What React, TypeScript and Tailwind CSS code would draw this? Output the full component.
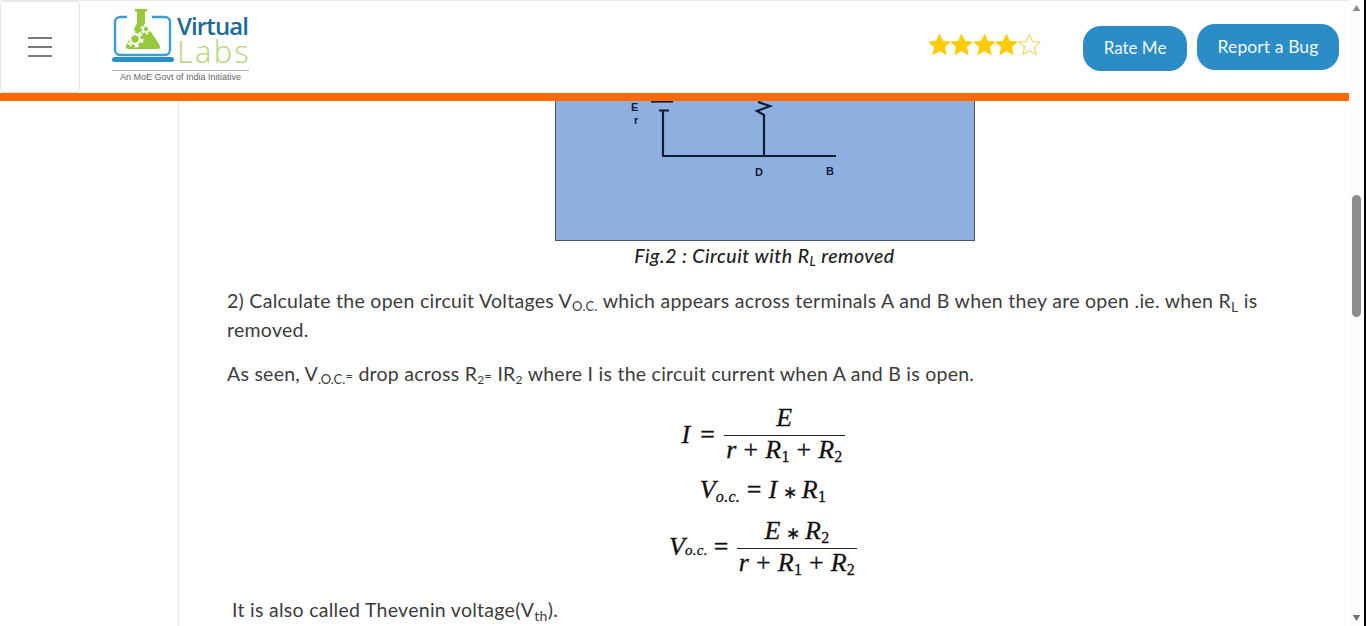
import React from 'react';

const Star = ({ filled }: { filled: boolean }) => (
  <svg viewBox="0 0 24 24" className="h-[23px] w-[23px] -mr-[0.5px]">
    <path
      d="M12 1.5l3.2 7.2 7.8.8-5.9 5.2 1.8 7.7L12 18.4l-6.9 4 1.8-7.7L1 9.5l7.8-.8z"
      fill={filled ? '#ffcc00' : '#ffffff'}
      stroke={filled ? '#ffcc00' : '#f5d76a'}
      strokeWidth={filled ? 1 : 1.2}
      strokeLinejoin="round"
    />
  </svg>
);

const Gear = ({ cx, cy, r, w }: { cx: number; cy: number; r: number; w: number }) => (
  <g fill="none" stroke="#ffffff">
    <circle cx={cx} cy={cy} r={r * 0.6} strokeWidth={w} />
    <circle cx={cx} cy={cy} r={r * 0.92} strokeWidth={w * 1.1} strokeDasharray={`${r * 0.5} ${r * 0.46}`} />
  </g>
);

const Logo = () => (
  <div className="flex w-[137px] flex-col">
    <div className="flex h-[55px] items-start">
      <svg viewBox="0 0 62 55" className="h-[55px] w-[62px] shrink-0">
        <path d="M15 9 H8 a5 5 0 0 0 -5 5 V42 a5 5 0 0 0 5 5 H53 a5 5 0 0 0 5 -5 V14 a5 5 0 0 0 -5 -5 H40" fill="none" stroke="#3a9fd0" strokeWidth="2.4" />
        <path d="M2.5 49 H59.5 a2.5 2.5 0 0 1 0 5 H2.5 a2.5 2.5 0 0 1 0 -5 Z" fill="#2a8fc9" />
        <path d="M23 1 H35 V3.5 H33 V15 L47 36 Q50 41 45 41 H18 Q11 41 15 36 L25 15 V3.5 H23 Z" fill="#97c93d" />
        <Gear cx={23} cy={31} r={8} w={2.2} />
        <Gear cx={34} cy={21} r={5} w={1.6} />
      </svg>
      <div className="ml-[3px] flex flex-col pt-[4px] font-['Open_Sans',sans-serif]">
        <span className="text-[24px] leading-[27px] font-semibold tracking-[-0.9px] text-[#1c6a9c]">Virtual</span>
        <span className="-mt-[1px] text-[31px] leading-[26px] font-light tracking-[2.2px] text-[#b3d67c]">Labs</span>
      </div>
    </div>
    <div className="mt-[7px] border-t border-[#b5b5b5] pt-[1px] text-center font-['Liberation_Sans',sans-serif] text-[9px] leading-[11px] text-[#666]">
      An MoE Govt of India Initiative
    </div>
  </div>
);

const Header = () => (
  <header className="shrink-0">
    <div className="flex h-[93px] items-center border-t border-[#e8e8e8] bg-white">
      <button className="flex h-[92px] w-[80px] shrink-0 items-center justify-center rounded-[4px] border border-[#e6e6e6]">
        <span className="flex w-[24px] flex-col gap-[7px]">
          <span className="h-[2px] bg-[#7b7b7b]" />
          <span className="h-[2px] bg-[#7b7b7b]" />
          <span className="h-[2px] bg-[#7b7b7b]" />
        </span>
      </button>
      <div className="mt-[7px] ml-[32px] self-start">
        <Logo />
      </div>
      <div className="ml-auto flex items-center">
        <div className="mr-[43px] mb-[5px] flex">
          <Star filled />
          <Star filled />
          <Star filled />
          <Star filled />
          <Star filled={false} />
        </div>
        <button className="mt-[2px] h-[45px] w-[104px] rounded-[18px] bg-[#2b8cc8] text-[17px] text-[#f2f8fc]">Rate Me</button>
        <button className="mx-[10px] h-[46px] w-[142px] rounded-[18px] bg-[#2b8cc8] text-[17.5px] tracking-[0.1px] text-[#f2f8fc]">Report a Bug</button>
      </div>
    </div>
    <div className="h-[8px] bg-[#ff6a00]" />
  </header>
);

const Figure = () => (
  <div className="mx-auto h-[140px] w-[420px] border border-t-0 border-[#4b5563] bg-[#8db0e0]">
    <svg viewBox="1 0 418 139" className="h-[139px] w-[418px] font-['Liberation_Sans',sans-serif]">
      <g stroke="#101c30" strokeWidth="2.2" fill="none">
        <path d="M96 0.5 H118" />
        <path d="M104 9.5 H114 M108 9.5 V55 H281" />
        <path d="M209 55 V14 L202 10 L215 5 L203 1" />
      </g>
      <g fill="#101c30" fontSize="11" fontWeight="700">
        <text x="76" y="10">E</text>
        <text x="79" y="23">r</text>
        <text x="200" y="75">D</text>
        <text x="271" y="74">B</text>
      </g>
    </svg>
  </div>
);

const Frac = ({ top, bottom, topClass }: { top: React.ReactNode; bottom: React.ReactNode; topClass: string }) => (
  <span className="inline-flex flex-col items-center">
    <span className={topClass}>{top}</span>
    <span className="w-full border-t border-[#222] px-[2px] leading-[27px]">{bottom}</span>
  </span>
);

const Sum = () => (
  <>
    <i>r</i> + <i>R</i><sub className="text-[16px]">1</sub> + <i>R</i><sub className="text-[16px]">2</sub>
  </>
);

const Star2 = () => <span className="mx-[5px] text-[17px]">∗</span>;

const Math = () => (
  <div className="mt-[14px] flex flex-col items-center pr-[3px] font-['Liberation_Serif',serif] text-[26px] text-[#111] [-webkit-text-stroke:0.3px_#111]">
    <div className="flex items-center justify-center">
      <i>I</i><span className="mr-[9px] ml-[10px]">=</span>
      <Frac topClass="px-[2px] pb-[4px] leading-[26px]" top={<i>E</i>} bottom={<Sum />} />
    </div>
    <div className="mt-[12px] leading-[30px]">
      <i>V</i><sub className="text-[16px] italic">o.c.</sub> = <i>I</i><Star2 /><i>R</i><sub className="text-[16px]">1</sub>
    </div>
    <div className="mt-[8px] flex items-center justify-center">
      <i>V</i><sub className="text-[15px] italic">o.c.</sub><span className="mr-[8px] ml-[6px]">=</span>
      <Frac topClass="px-[2px] leading-[29px]" top={<><i>E</i><Star2 /><i>R</i><sub className="text-[16px]">2</sub></>} bottom={<Sum />} />
    </div>
  </div>
);

const Scrollbar = () => (
  <div className="flex w-[17px] shrink-0 flex-col items-center border-r-2 border-black bg-[#fdfdfd] pr-[1px]">
    <svg viewBox="0 0 10 8" className="mt-[5px] h-[6px] w-[9px]"><path d="M5 0l5 8H0z" fill="#8a8a8a" /></svg>
    <div className="mt-[184px] h-[122px] w-[9px] rounded-full bg-[#8c8c8c]" />
    <svg viewBox="0 0 10 8" className="mt-auto mb-[5px] h-[6px] w-[9px]"><path d="M5 8l5-8H0z" fill="#707070" /></svg>
  </div>
);

export default function App() {
  return (
    <div className="flex h-[626px] w-[1366px] overflow-hidden bg-white font-['Lato',sans-serif] text-[#3c3c3c]">
      <div className="flex min-w-0 flex-1 flex-col">
        <Header />
        <main className="flex flex-1 overflow-hidden">
          <div className="w-[179px] shrink-0 border-r border-[#e6e6e6]" />
          <article className="w-[1170px] pr-[47px] pl-[48px] text-[19.5px] tracking-[0.28px]">
            <Figure />
            <p className="mt-[2px] text-center text-[19.5px] leading-[26px] font-medium tracking-[0.5px] text-[#222] italic">
              Fig.2 : Circuit with R<sub className="text-[13px]">L</sub> removed
            </p>
            <p className="mt-[17px] leading-[29px]">
              2) Calculate the open circuit Voltages V<sub className="text-[13px]">O.C.</sub> which appears across terminals A and B when they are open .ie. when R<sub className="text-[14px]">L</sub> is removed.
            </p>
            <p className="mt-[15px] leading-[29px] tracking-[0.25px]">
              As seen, V<sub className="text-[13px] tracking-normal">.O.C.</sub><span className="text-[13px]">=</span> drop across R<sub className="text-[12px]">2</sub><span className="text-[13px]">=</span> IR<sub className="text-[12px]">2</sub> where I is the circuit current when A and B is open.
            </p>
            <Math />
            <p className="mt-[19px] pl-[5px] leading-[29px]">
              It is also called Thevenin voltage(V<sub className="text-[14px]">th</sub>).
            </p>
          </article>
        </main>
      </div>
      <Scrollbar />
    </div>
  );
}
